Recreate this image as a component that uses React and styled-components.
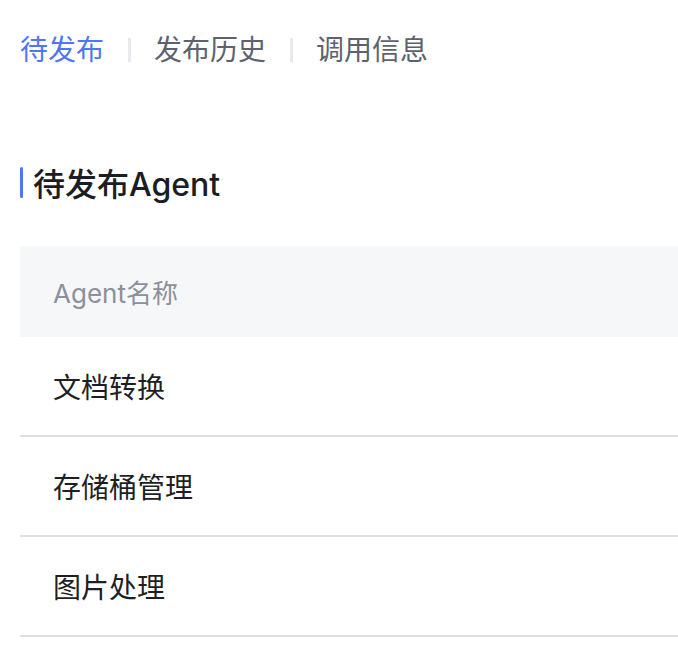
import styled, { createGlobalStyle } from 'styled-components';

const GlobalStyle = createGlobalStyle`
    body {
        margin: 0;
        background: #ffffff;
        font-family: Inter, "Noto Sans CJK SC", sans-serif;
    }
`;

const Page = styled.div`
    padding: 26px 0 0 20px;
`;

const Tabs = styled.div`
    display: flex;
    align-items: center;
    height: 48px;
`;

const Tab = styled.div`
    font-size: 28px;
    line-height: 48px;
    color: ${(p) => (p.$active ? '#4e76f6' : '#5c6270')};
`;

const Divider = styled.span`
    width: 3px;
    height: 24px;
    margin: 0 23px 0 24px;
    background: #e8e9ed;
`;

const Title = styled.h2`
    display: flex;
    align-items: center;
    gap: 10px;
    margin: 84px 0 0;
    height: 48px;
    font-size: 32px;
    font-weight: 500;
    color: #1b1d23;

    &::before {
        content: '';
        width: 3px;
        height: 31px;
        border-radius: 2px;
        background: #4e76f6;
    }
`;

const Table = styled.div`
    margin-top: 40px;
`;

const HeaderRow = styled.div`
    display: flex;
    align-items: center;
    height: 91px;
    padding-left: 33px;
    background: #f6f7f9;
    font-size: 26px;
    color: #8b909c;
`;

const Row = styled.div`
    display: flex;
    align-items: center;
    height: 98px;
    padding-left: 33px;
    border-bottom: 2px solid #dfdfe4;
    font-size: 28px;
    color: #1d1f24;
`;

const agents = ['文档转换', '存储桶管理', '图片处理'];

export default function App() {
    return (
        <>
            <GlobalStyle />
            <Page>
                <Tabs>
                    <Tab $active>待发布</Tab>
                    <Divider />
                    <Tab>发布历史</Tab>
                    <Divider />
                    <Tab>调用信息</Tab>
                </Tabs>
                <Title>待发布Agent</Title>
                <Table>
                    <HeaderRow>Agent名称</HeaderRow>
                    {agents.map((name) => (
                        <Row key={name}>{name}</Row>
                    ))}
                </Table>
            </Page>
        </>
    );
}
